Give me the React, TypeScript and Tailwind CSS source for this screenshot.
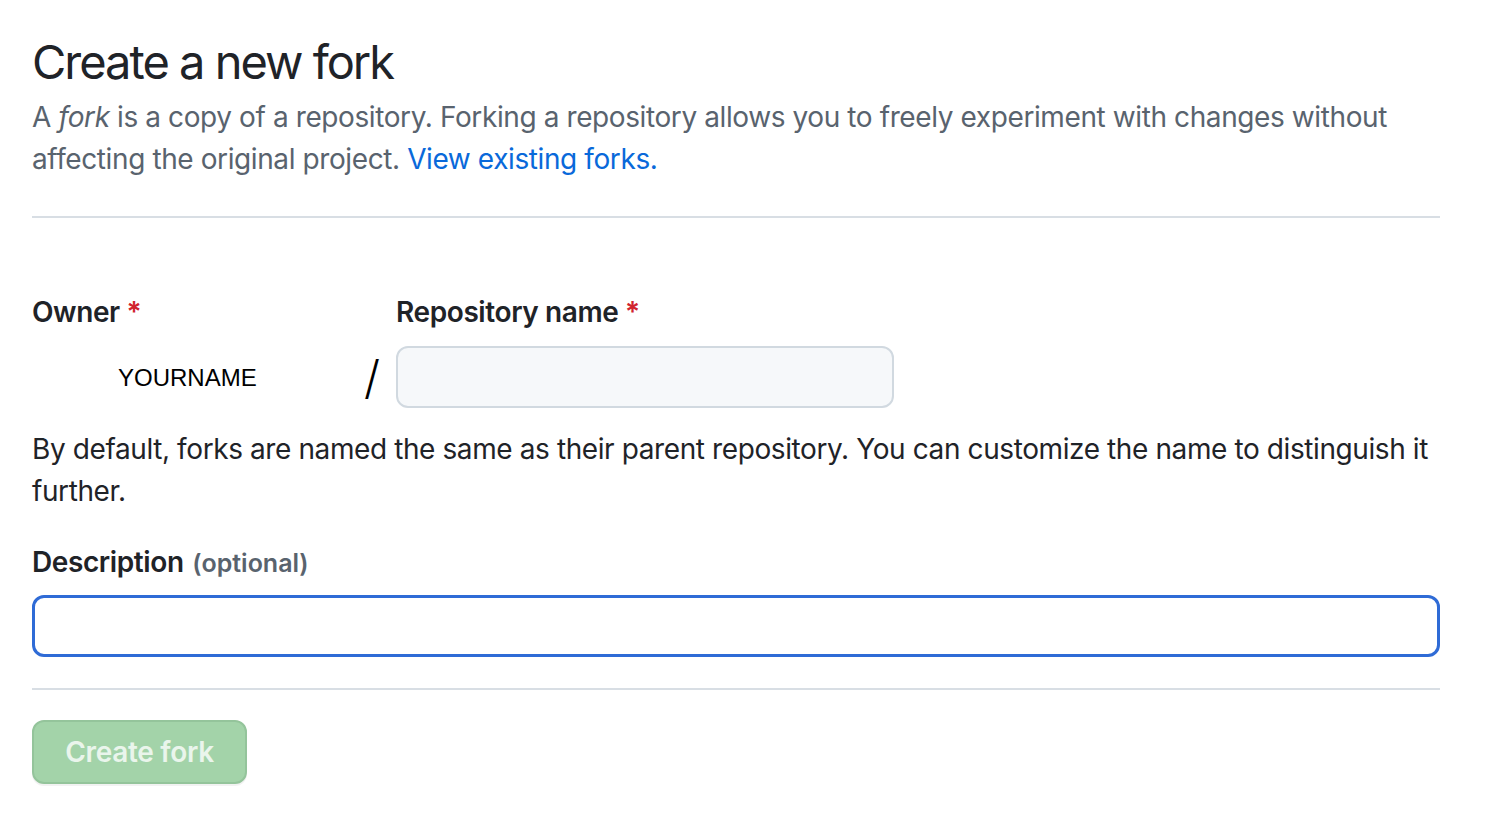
import React from 'react';

const App: React.FC = () => {
  return (
    <div className="min-h-screen bg-white font-['Inter',sans-serif] text-[#1f2328]">
      <div className="w-[1408px] ml-[32px] pt-[30px]">
        <h1 className="text-[47px] leading-[64px] font-normal tracking-[-2px]">Create a new fork</h1>
        <p className="mt-[2px] text-[28px] leading-[42px] tracking-[-0.4px] text-[#59636e]">
          A <em>fork</em> is a copy of a repository. Forking a repository allows you to freely experiment with changes without
          affecting the original project.{' '}
          <a href="#" className="text-[#0969da]">View existing forks.</a>
        </p>
        <div className="mt-[36px] h-[2px] bg-[#d8dee4]" />

        <div className="mt-[72px] flex items-start">
          <div className="w-[320px]">
            <label className="block text-[28px] leading-[44px] font-semibold tracking-[-0.4px]">
              Owner <span className="text-[#d1242f]">*</span>
            </label>
            <div className="mt-[12px] h-[62px] flex items-center pl-[86px] pt-[2px] font-['Liberation_Sans',sans-serif] text-[24px] text-black">
              YOURNAME
            </div>
          </div>
          <div className="w-[44px] pt-[56px]">
            <div className="h-[62px] flex items-center justify-center pr-[4px] text-[46px] font-light text-black">/</div>
          </div>
          <div>
            <label className="block text-[28px] leading-[44px] font-semibold tracking-[-0.4px]">
              Repository name <span className="text-[#d1242f]">*</span>
            </label>
            <input
              type="text"
              className="mt-[12px] block w-[498px] h-[62px] rounded-[12px] border-2 border-[#d1d9e0] bg-[#f6f8fa] px-4 text-[28px] outline-none"
            />
          </div>
        </div>

        <p className="mt-[20px] text-[28px] leading-[42px] tracking-[-0.4px]">
          By default, forks are named the same as their parent repository. You can customize the name to distinguish it further.
        </p>

        <label className="mt-[28px] block text-[28px] leading-[44px] font-semibold tracking-[-0.4px]">
          Description{' '}
          <span className="ml-[2px] text-[25px] tracking-normal text-[#59636e]">(optional)</span>
        </label>
        <input
          type="text"
          className="mt-[10px] block w-full h-[62px] rounded-[12px] border-[3px] border-[#2f6bd6] bg-white px-4 text-[28px] outline-none"
        />

        <div className="mt-[31px] h-[2px] bg-[#d8dee4]" />

        <button
          disabled
          className="mt-[30px] h-[64px] w-[215px] rounded-[12px] border-2 border-[#94c49b] bg-[#a3d3a9] text-[28px] font-semibold tracking-[-0.3px] text-[#eaf5ec] shadow-[0_2px_0_rgba(31,35,40,0.06)]"
        >
          Create fork
        </button>
      </div>
    </div>
  );
};

export default App;
